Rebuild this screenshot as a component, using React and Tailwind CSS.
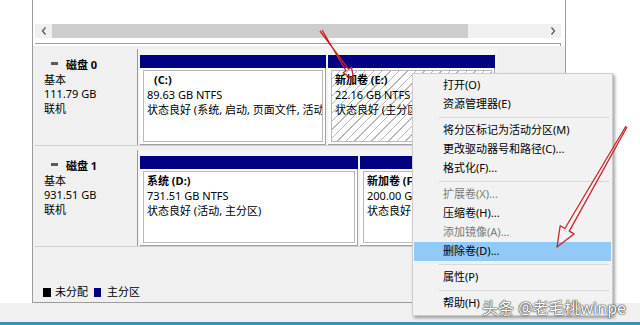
function Partition({ className, title, size, status, hatched }) {
  return (
    <div className={`flex flex-col mt-[6px] ${className}`}>
      <div className="h-[13px] bg-[#000080]" />
      <div className="flex-1 bg-white border-r border-b border-[#a0a0a0] p-[2px] pl-[3px] min-h-0">
        <div
          className={`h-full border border-[#b9b9b9] px-[3px] pt-[1px] leading-[15px] whitespace-nowrap overflow-hidden ${
            hatched
              ? "bg-[repeating-linear-gradient(135deg,#ffffff_0px,#ffffff_5px,#b8b8b8_5px,#b8b8b8_6px)]"
              : "bg-white"
          }`}
        >
          <div className="font-bold">{title}</div>
          <div>{size}</div>
          <div>{status}</div>
        </div>
      </div>
    </div>
  );
}

function DiskLabel({ name, size }) {
  return (
    <div className="w-[103px] shrink-0 bg-[#f0f0f0] border-r border-[#9a9a9a] pl-[9px] pt-[9px] leading-[14.5px]">
      <div className="flex items-center font-bold">
        <span className="ml-[7px] mr-[8px] w-[7px] h-[3px] bg-[#5a5a5a] -mt-[3px]" />
        {name}
      </div>
      <div>基本</div>
      <div>{size}</div>
      <div>联机</div>
    </div>
  );
}

function MenuItem({ label, disabled, active }) {
  return (
    <div
      className={`h-[19px] flex items-center pl-[29px] ${active ? "bg-[#91c9f7]" : ""} ${
        disabled ? "text-[#7a7a7a]" : "text-black"
      }`}
    >
      {label}
    </div>
  );
}

function Sep() {
  return (
    <div className="h-[7px] flex items-center pl-[25px] pr-[2px]">
      <div className="h-px w-full bg-[#d7d7d7]" />
    </div>
  );
}

export default function App() {
  return (
    <div className="relative w-[640px] h-[325px] bg-white overflow-hidden font-['Noto_Sans','Noto_Sans_CJK_SC',sans-serif] text-[11px] text-black">
      {/* main frame */}
      <div className="flex flex-col h-[303px] ml-[32px] w-[534px] border-l border-r border-b border-[#9c9c9c]">
        {/* list view bottom + scrollbar */}
        <div className="h-[43px] shrink-0 bg-white flex flex-col pl-[2px] pr-[4px]">
          <div className="h-[24px]" />
          <div className="h-[14px] flex items-center bg-[#f0f0f0]">
            <div className="w-[17px] flex justify-center">
              <svg width="6" height="8" viewBox="0 0 6 8">
                <polyline points="4.5,0.5 1.5,4 4.5,7.5" fill="none" stroke="#606060" strokeWidth="1.4" />
              </svg>
            </div>
            <div className="w-[416px] h-full bg-[#cdcdcd]" />
            <div className="flex-1" />
            <div className="w-[17px] flex justify-center">
              <svg width="6" height="8" viewBox="0 0 6 8">
                <polyline points="1.5,0.5 4.5,4 1.5,7.5" fill="none" stroke="#606060" strokeWidth="1.4" />
              </svg>
            </div>
          </div>
        </div>
        <div className="shrink-0 mr-[4px] ml-[2px] h-[3px] border-t border-[#a0a0a0] border-r" />

        {/* graphical pane */}
        <div className="flex-1 bg-[#f0f0f0] flex flex-col pl-[2px] pt-[3px]">
          <div className="flex h-[97px] w-[462px] border-b border-[#d0d0d0] bg-[#f4f4f4]">
            <DiskLabel name="磁盘 0" size="111.79 GB" />
            <div className="flex gap-[2px] pl-[2px] flex-1">
              <Partition
                className="w-[186px]"
                title={<span className="pl-[7px]">(C:)</span>}
                size="89.63 GB NTFS"
                status="状态良好 (系统, 启动, 页面文件, 活动, 主分区)"
              />
              <Partition
                className="w-[167px]"
                title="新加卷  (E:)"
                size="22.16 GB NTFS"
                status="状态良好 (主分区)"
                hatched
              />
            </div>
          </div>
          <div className="flex h-[97px] w-[462px] mt-[4px] border-b border-[#d0d0d0] bg-[#f4f4f4]">
            <DiskLabel name="磁盘 1" size="931.51 GB" />
            <div className="flex gap-[2px] pl-[2px] flex-1">
              <Partition
                className="w-[218px]"
                title="系统  (D:)"
                size="731.51 GB NTFS"
                status="状态良好 (活动, 主分区)"
              />
              <Partition
                className="w-[135px]"
                title="新加卷  (F:)"
                size="200.00 GB NTFS"
                status="状态良好 (主分区)"
              />
            </div>
          </div>
          <div className="mt-auto mb-[3px] flex items-center pl-[8px] leading-[14px]">
            <span className="w-[8px] h-[9px] bg-black mr-[4px]" />
            <span>未分配</span>
            <span className="w-[7px] h-[9px] bg-[#000080] ml-[6px] mr-[6px]" />
            <span>主分区</span>
          </div>
        </div>
      </div>

      {/* status bar */}
      <div className="h-[19px] bg-[#f0f0f0]" />
      <div className="h-[3px] bg-[#3c8fb6]" />

      {/* context menu */}
      <div className="absolute left-[412px] top-[73px] w-[201px] bg-[#f2f2f2] border border-[#cccccc] shadow-[2px_2px_3px_rgba(0,0,0,0.35)] pt-[2px] pb-[2px] px-px">
        <MenuItem label="打开(O)" />
        <MenuItem label="资源管理器(E)" />
        <Sep />
        <MenuItem label="将分区标记为活动分区(M)" />
        <MenuItem label="更改驱动器号和路径(C)..." />
        <MenuItem label="格式化(F)..." />
        <Sep />
        <MenuItem label="扩展卷(X)..." disabled />
        <MenuItem label="压缩卷(H)..." />
        <MenuItem label="添加镜像(A)..." disabled />
        <MenuItem label="删除卷(D)..." active />
        <Sep />
        <MenuItem label="属性(P)" />
        <Sep />
        <MenuItem label="帮助(H)" />
      </div>

      {/* annotation arrows */}
      <svg className="absolute left-0 top-0 pointer-events-none" width="640" height="325" viewBox="0 0 640 325">
        <polyline
          points="320,31 348.5,69.2 351.4,67.2 354,80 343.1,72.8 346.1,70.8 322,30"
          fill="none"
          stroke="#c8242c"
          strokeWidth="1.3"
          strokeLinejoin="round"
        />
        <polyline
          points="627,127 569.3,231.1 574,233.9 557,247 560.2,225.7 564.9,228.5 626,126"
          fill="none"
          stroke="#c8242c"
          strokeWidth="1.3"
          strokeLinejoin="round"
        />
      </svg>

      {/* watermark */}
      <div className="absolute left-[482px] top-[298px] text-[16px] leading-[20px] text-white whitespace-nowrap [text-shadow:0_0_1px_#333,0_0_1px_#333,0_0_2px_#555]">
        头条 @老毛桃winpe
      </div>
    </div>
  );
}
